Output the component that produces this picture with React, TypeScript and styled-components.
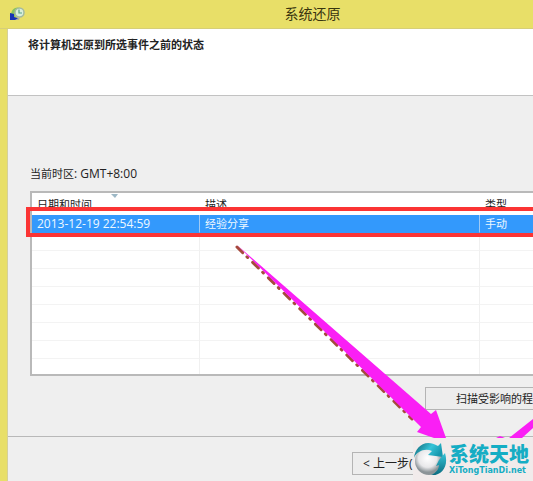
import React from "react";
import styled, { createGlobalStyle } from "styled-components";

const Global = createGlobalStyle`
  * { box-sizing: border-box; }
  body {
    margin: 0;
    overflow: hidden;
    background: #efefef;
    color: #222;
    font: 11px/16px "Open Sans", "Noto Sans CJK SC", sans-serif;
  }
`;

const Frame = styled.main`
  position: relative;
  display: flex;
  flex-direction: column;
  min-height: 100vh;
  overflow: hidden;
  background: #e8df68;
`;

const TitleBar = styled.header`
  display: flex;
  align-items: center;
  height: 29px;
  padding-left: 9px;
  border-bottom: 1px solid #d6cf78;
`;

const Title = styled.h1`
  flex: 1;
  margin: 0;
  padding-left: 66px;
  font-size: 14px;
  line-height: 20px;
  font-weight: 400;
  text-align: center;
  color: #38350f;
`;

const Body = styled.div`
  display: flex;
  flex: 1;
  flex-direction: column;
  margin-left: 7px;
  border-left: 1px solid #d5d09a;
  background: #efefef;
`;

const Banner = styled.section`
  height: 67px;
  padding: 8px 20px;
  border-bottom: 1px solid #c2c2c2;
  background: #fff;
`;

const Heading = styled.h2`
  margin: 0;
  font-size: 11px;
  line-height: 16px;
  font-weight: 700;
`;

const Content = styled.section`
  flex: 1;
  display: flex;
  flex-direction: column;
  padding: 70px 0 0 22px;
`;

const Zone = styled.p`
  margin: 0 0 9px;
`;

const Latin = styled.span`
  font-size: 12px;
`;

const TableBox = styled.div`
  position: relative;
  border: 2px solid #b9b9b9;
  border-right: 0;
  background: #fff;
`;

const Table = styled.table`
  width: 100%;
  table-layout: fixed;
  border-collapse: separate;
  border-spacing: 0;
`;

const DateCol = styled.col` width: 168px; `;
const TypeCol = styled.col` width: 53px; `;

const HeadCell = styled.th`
  height: 22px;
  padding: 2px 0 0 5px;
  font-weight: 400;
  text-align: left;
  white-space: nowrap;
`;

const Cell = styled.td<{ $selected?: boolean }>`
  height: 18px;
  padding: 0 0 0 5px;
  border-bottom: 1px solid ${(p) => (p.$selected ? "#3399fc" : "#f3f3f3")};
  border-right: 1px solid ${(p) => (p.$selected ? "#9fcaf5" : "#f0f0f0")};
  background: ${(p) => (p.$selected ? "#3399fc" : "#fff")};
  color: #eef8ff;
  white-space: nowrap;
  &:last-child { border-right: 0; }
  tr:last-child > & { height: 15px; border-bottom: 0; }
`;

const SortMark = styled.svg`
  position: absolute;
  top: 1px;
  left: 79px;
`;

const Highlight = styled.div`
  position: absolute;
  top: 14px;
  left: -6px;
  right: -6px;
  height: 30px;
  border: 4px solid #fb3434;
`;

const Actions = styled.div`
  display: flex;
  justify-content: flex-end;
  padding-top: 11px;
`;

const Button = styled.button<{ $wide?: boolean }>`
  width: ${(p) => (p.$wide ? 150 : 90)}px;
  height: 23px;
  margin-right: ${(p) => (p.$wide ? -42 : 0)}px;
  padding: 0 ${(p) => (p.$wide ? 0 : 10)}px;
  border: 1px solid #b4b4b4;
  background: #ededed;
  color: #222;
  font: inherit;
  font-size: ${(p) => (p.$wide ? 11 : 12)}px;
  text-align: ${(p) => (p.$wide ? "center" : "left")};
  white-space: nowrap;
`;

const Footer = styled.footer`
  display: flex;
  justify-content: flex-end;
  height: 45px;
  padding: 15px 91px 0 0;
  border-top: 1px solid #b8b8b8;
`;

const Arrows = styled.svg`
  position: absolute;
  right: 0;
  bottom: 0;
  pointer-events: none;
`;

const Watermark = styled.aside`
  position: absolute;
  right: 0;
  bottom: 0;
  display: flex;
  align-items: flex-start;
  width: 120px;
  height: 43px;
  background: #f1ebeb;
  color: #16adc4;
`;

const Brand = styled.div`
  display: flex;
  flex-direction: column;
  padding: 5px 0 0 1px;
`;

const BrandName = styled.strong`
  font: 900 20px/22px "Noto Sans CJK SC", sans-serif;
  white-space: nowrap;
`;

const BrandLink = styled.a`
  color: inherit;
  font: 700 8px/12px "DejaVu Sans", sans-serif;
  text-decoration: none;
`;

const GlobeDrawing = styled.svg`
  flex: none;
`;

const RestoreIcon = () => (
  <svg width="17" height="17" viewBox="0 0 17 17" aria-hidden="true">
    <path d="M2 9C2 3 7 0 11 2L9 5C6 5 5 8 7 11L3 12Z" fill="#8ac45c" />
    <circle cx="10.5" cy="6.5" r="4.5" fill="#d9eeda" stroke="#a3b9a0" strokeWidth="1.5" />
    <path d="M10 3.5V7H13" fill="none" stroke="#579f8a" strokeWidth="1.2" />
    <path d="M1 7L5 8V11L9 12L8 14L1 14Z" fill="#1733b4" />
    <path d="M6 14L11 11L10 14Z" fill="#a8aaa7" />
  </svg>
);

const Globe = () => (
  <GlobeDrawing width="35" height="40" viewBox="0 0 35 40" aria-hidden="true">
    <defs>
      <radialGradient id="ball" cx="45%" cy="40%">
        <stop offset="0" stopColor="#fff" />
        <stop offset=".65" stopColor="#e8e8ea" />
        <stop offset="1" stopColor="#8c9498" />
      </radialGradient>
      <linearGradient id="ribbon" x2="1" y2="0.4">
        <stop stopColor="#0c5c6c" />
        <stop offset=".6" stopColor="#36c4d8" />
        <stop offset="1" stopColor="#1698ae" />
      </linearGradient>
      <linearGradient id="curl" x2="0" y2="1">
        <stop stopColor="#36c4d8" />
        <stop offset="1" stopColor="#0b6c80" />
      </linearGradient>
    </defs>
    <circle cx="16" cy="23" r="14" fill="url(#ball)" />
    <path d="M1 20C2 9 12 0 25 8L28 5L30 19L15 17L19 13C12 10 4 13 1 20Z" fill="url(#ribbon)" />
    <path d="M32 15C36 28 29 38 18 37C23 35 26 31 26 27L23 28L26 22Z" fill="url(#curl)" />
  </GlobeDrawing>
);

export default function App() {
  return (
    <>
      <Global />
      <Frame>
        <TitleBar>
          <RestoreIcon />
          <Title>系统还原</Title>
        </TitleBar>
        <Body>
          <Banner><Heading>将计算机还原到所选事件之前的状态</Heading></Banner>
          <Content>
            <Zone>当前时区<Latin>: GMT+8:00</Latin></Zone>
            <TableBox>
              <Table>
                <colgroup><DateCol /><col /><TypeCol /></colgroup>
                <thead>
                  <tr><HeadCell>日期和时间</HeadCell><HeadCell>描述</HeadCell><HeadCell>类型</HeadCell></tr>
                </thead>
                <tbody>
                  <tr>
                    <Cell $selected><Latin>2013-12-19 22:54:59</Latin></Cell>
                    <Cell $selected>经验分享</Cell>
                    <Cell $selected>手动</Cell>
                  </tr>
                  {Array.from({ length: 8 }, (_, i) => <tr key={i}><Cell /><Cell /><Cell /></tr>)}
                </tbody>
              </Table>
              <SortMark width="8" height="5" aria-hidden="true"><path d="M0 0H7L4 4Z" fill="#9db8c6" /></SortMark>
              <Highlight />
            </TableBox>
            <Actions><Button $wide>扫描受影响的程序</Button></Actions>
          </Content>
          <Footer><Button>&lt; 上一步(B)</Button></Footer>
        </Body>
        <Arrows width="533" height="481" viewBox="0 0 533 481" aria-hidden="true">
          <path d="M237 247L412 419" stroke="#a64a3d" strokeWidth="3" strokeLinecap="round" strokeDasharray="8 6 1 7" fill="none" />
          <path d="M237 245L431 414L436 410L446 438H434L417 432L421 427Z" fill="#fa1ff5" />
          <path d="M533 419L509 438H522L533 428ZM496 438L500 436L505 438Z" fill="#fa1ff5" />
        </Arrows>
        <Watermark>
          <Globe />
          <Brand>
            <BrandName>系统天地</BrandName>
            <BrandLink href="#">XiTongTianDi.net</BrandLink>
          </Brand>
        </Watermark>
      </Frame>
    </>
  );
}
